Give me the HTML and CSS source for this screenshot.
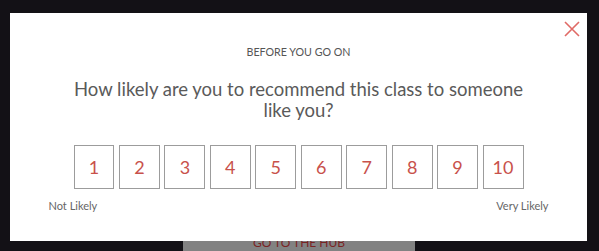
FILE: index.html
```html
<!DOCTYPE html>
<html>
<head>
<meta charset="utf-8">
<link rel="stylesheet" href="styles.css">
</head>
<body>
<div class="page">
  <div class="hub-btn">GO TO THE HUB</div>
</div>
<div class="modal">
  <button class="close" aria-label="Close">
    <svg width="16" height="16" viewBox="0 0 16 16"><path d="M1 1 L15 15 M15 1 L1 15" stroke="#e06a66" stroke-width="1.6" fill="none"/></svg>
  </button>
  <div class="eyebrow">BEFORE YOU GO ON</div>
  <h1 class="question">How likely are you to recommend this class to someone like you?</h1>
  <div class="scale">
    <button class="opt">1</button>
    <button class="opt">2</button>
    <button class="opt">3</button>
    <button class="opt">4</button>
    <button class="opt">5</button>
    <button class="opt">6</button>
    <button class="opt">7</button>
    <button class="opt">8</button>
    <button class="opt">9</button>
    <button class="opt">10</button>
  </div>
  <div class="labels">
    <span>Not Likely</span>
    <span>Very Likely</span>
  </div>
</div>
</body>
</html>
```

FILE: styles.css
```css
html, body {
  margin: 0;
  padding: 0;
}
body {
  width: 599px;
  height: 251px;
  background: #131116;
  font-family: Lato, "Open Sans", sans-serif;
  overflow: hidden;
  position: relative;
}
.page {
  height: 251px;
  display: flex;
  flex-direction: column;
  justify-content: flex-end;
  padding-left: 183px;
  box-sizing: border-box;
}
.hub-btn {
  width: 232px;
  height: 26px;
  margin-bottom: -8px;
  background: #828282;
  color: #7a2424;
  font-size: 12px;
  line-height: 14px;
  text-align: center;
  padding-top: 2.5px;
  box-sizing: border-box;
}
.modal {
  position: absolute;
  left: 10px;
  top: 13px;
  width: 577px;
  height: 228px;
  background: #fff;
  box-sizing: border-box;
  padding-top: 32px;
  display: flex;
  flex-direction: column;
  align-items: center;
  color: #555;
}
.close {
  position: absolute;
  top: 8px;
  right: 7px;
  width: 16px;
  height: 16px;
  padding: 0;
  border: 0;
  background: none;
  display: flex;
}
.eyebrow {
  font-size: 10.7px;
  line-height: 13px;
  color: #555;
}
.question {
  margin: 20.5px 0 0;
  width: 460px;
  font-size: 18.5px;
  line-height: 21px;
  font-weight: 400;
  text-align: center;
  color: #5a5a5a;
}
.scale {
  margin-top: 24px;
  width: 450px;
  display: grid;
  grid-template-columns: repeat(10, 1fr);
  gap: 4.5px;
}
.opt {
  height: 44px;
  padding: 0;
  border: 1px solid #9c9c9c;
  background: #fff;
  color: #c8514b;
  font-family: Lato, "Open Sans", sans-serif;
  font-size: 18px;
}
.labels {
  margin-top: 10px;
  width: 500px;
  display: flex;
  justify-content: space-between;
  font-size: 11px;
  line-height: 14px;
  color: #666;
}
```
